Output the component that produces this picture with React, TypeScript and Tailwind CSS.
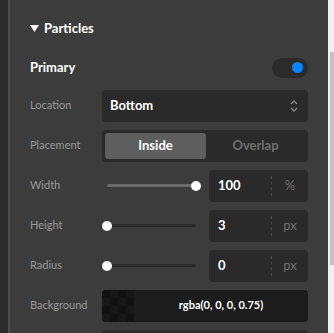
import React from 'react';

const font = { fontFamily: 'Lato, "Noto Sans", sans-serif' };

const Label = ({ children }: { children: React.ReactNode }) => (
  <div className="w-[72px] shrink-0 text-[11px] text-[#9a9a9a]">{children}</div>
);

const Slider = ({ value }: { value: number }) => (
  <div className="relative w-[99px] h-[32px] shrink-0 px-[5px] flex items-center">
    <div className="relative w-full h-[3px] rounded-full bg-[#2a2a2a]">
      <div className="absolute left-0 top-0 h-full rounded-full bg-[#6b6b6b]" style={{ width: `${value}%` }} />
      <div
        className="absolute top-1/2 w-[10px] h-[10px] -mt-[5px] -ml-[5px] rounded-full bg-white"
        style={{ left: `${value}%` }}
      />
    </div>
  </div>
);

const NumberBox = ({ value, unit }: { value: string; unit: string }) => (
  <div className="ml-[8px] flex-1 h-[32px] rounded-[4px] bg-[#2a2a2a] flex items-center">
    <div className="flex-1 pl-[9px] text-[13px] font-bold text-white">{value}</div>
    <div className="h-[20px] border-l border-dashed border-[#4a4a4a]" />
    <div className="w-[36px] text-center text-[13px] text-[#707070]">{unit}</div>
  </div>
);

export default function App() {
  return (
    <div className="w-[334px] h-[333px] flex overflow-hidden bg-[#3c3c3c]" style={font}>
      <div className="w-[8px] shrink-0 bg-[#2b2b2b]" />
      <div className="w-[2px] shrink-0 bg-[#4d4d4d]" />
      <div className="flex-1 pl-[20px] pr-[20px] pt-[19px] flex flex-col">
        {/* Section header */}
        <div className="h-[20px] flex items-center gap-[5px] text-white">
          <svg width="9" height="8" viewBox="0 0 9 8">
            <path d="M0 0 L9 0 L4.5 7 Z" fill="#ffffff" />
          </svg>
          <span className="text-[13px] font-bold">Particles</span>
        </div>

        {/* Primary toggle */}
        <div className="mt-[19px] h-[20px] flex items-center justify-between">
          <span className="text-[13px] font-bold text-white">Primary</span>
          <div className="w-[36px] h-[20px] rounded-full bg-[#2b2b2b] flex items-center justify-end pr-[5px]">
            <div className="w-[11px] h-[11px] rounded-full bg-[#0a84ff]" />
          </div>
        </div>

        <div className="mt-[12px] flex flex-col gap-[8px]">
          {/* Location */}
          <div className="flex items-center h-[32px]">
            <Label>Location</Label>
            <div className="flex-1 h-[32px] rounded-[4px] bg-[#2a2a2a] flex items-center justify-between pl-[8px] pr-[9px]">
              <span className="text-[13px] font-bold text-white">Bottom</span>
              <svg width="10" height="14" viewBox="0 0 10 14" fill="none" stroke="#8a8a8a" strokeWidth="1.3">
                <path d="M2 5 L5 2 L8 5" />
                <path d="M2 9 L5 12 L8 9" />
              </svg>
            </div>
          </div>

          {/* Placement */}
          <div className="flex items-center h-[32px]">
            <Label>Placement</Label>
            <div className="flex-1 h-[32px] rounded-[4px] bg-[#2a2a2a] p-[3px] flex">
              <div className="w-[101px] rounded-[3px] bg-[#5e5e5e] flex items-center justify-center text-[13px] font-bold text-white">
                Inside
              </div>
              <div className="flex-1 flex items-center justify-center text-[13px] font-bold text-[#6f6f6f]">Overlap</div>
            </div>
          </div>

          {/* Width */}
          <div className="flex items-center h-[32px]">
            <Label>Width</Label>
            <Slider value={100} />
            <NumberBox value="100" unit="%" />
          </div>

          {/* Height */}
          <div className="flex items-center h-[32px]">
            <Label>Height</Label>
            <Slider value={0} />
            <NumberBox value="3" unit="px" />
          </div>

          {/* Radius */}
          <div className="flex items-center h-[32px]">
            <Label>Radius</Label>
            <Slider value={0} />
            <NumberBox value="0" unit="px" />
          </div>

          {/* Background */}
          <div className="flex items-center h-[32px]">
            <Label>Background</Label>
            <div className="flex-1 h-[32px] rounded-[4px] bg-[#1c1c1c] overflow-hidden flex">
              <div className="w-[32px] grid grid-cols-4 grid-rows-4">
                {Array.from({ length: 16 }).map((_, i) => (
                  <div
                    key={i}
                    className={(Math.floor(i / 4) + (i % 4)) % 2 === 0 ? 'bg-[#121212]' : 'bg-[#171717]'}
                  />
                ))}
              </div>
              <div className="flex-1 flex items-center justify-center text-[11px] font-bold text-white">
                rgba(0, 0, 0, 0.75)
              </div>
            </div>
          </div>

          {/* Next row (cut off) */}
          <div className="flex items-center h-[32px]">
            <Label>&nbsp;</Label>
            <div className="flex-1 h-[32px] rounded-[4px] bg-[#2a2a2a] p-[3px] flex">
              <div className="w-[101px]" />
              <div className="w-[50px] rounded-[3px] bg-[#5e5e5e]" />
            </div>
          </div>
        </div>
      </div>
      <div className="w-[6px] shrink-0 bg-[#f0f0f0] pl-[2px] pt-[52px]">
        <div className="h-[213px] bg-[#c1c1c1]" />
      </div>
    </div>
  );
}
